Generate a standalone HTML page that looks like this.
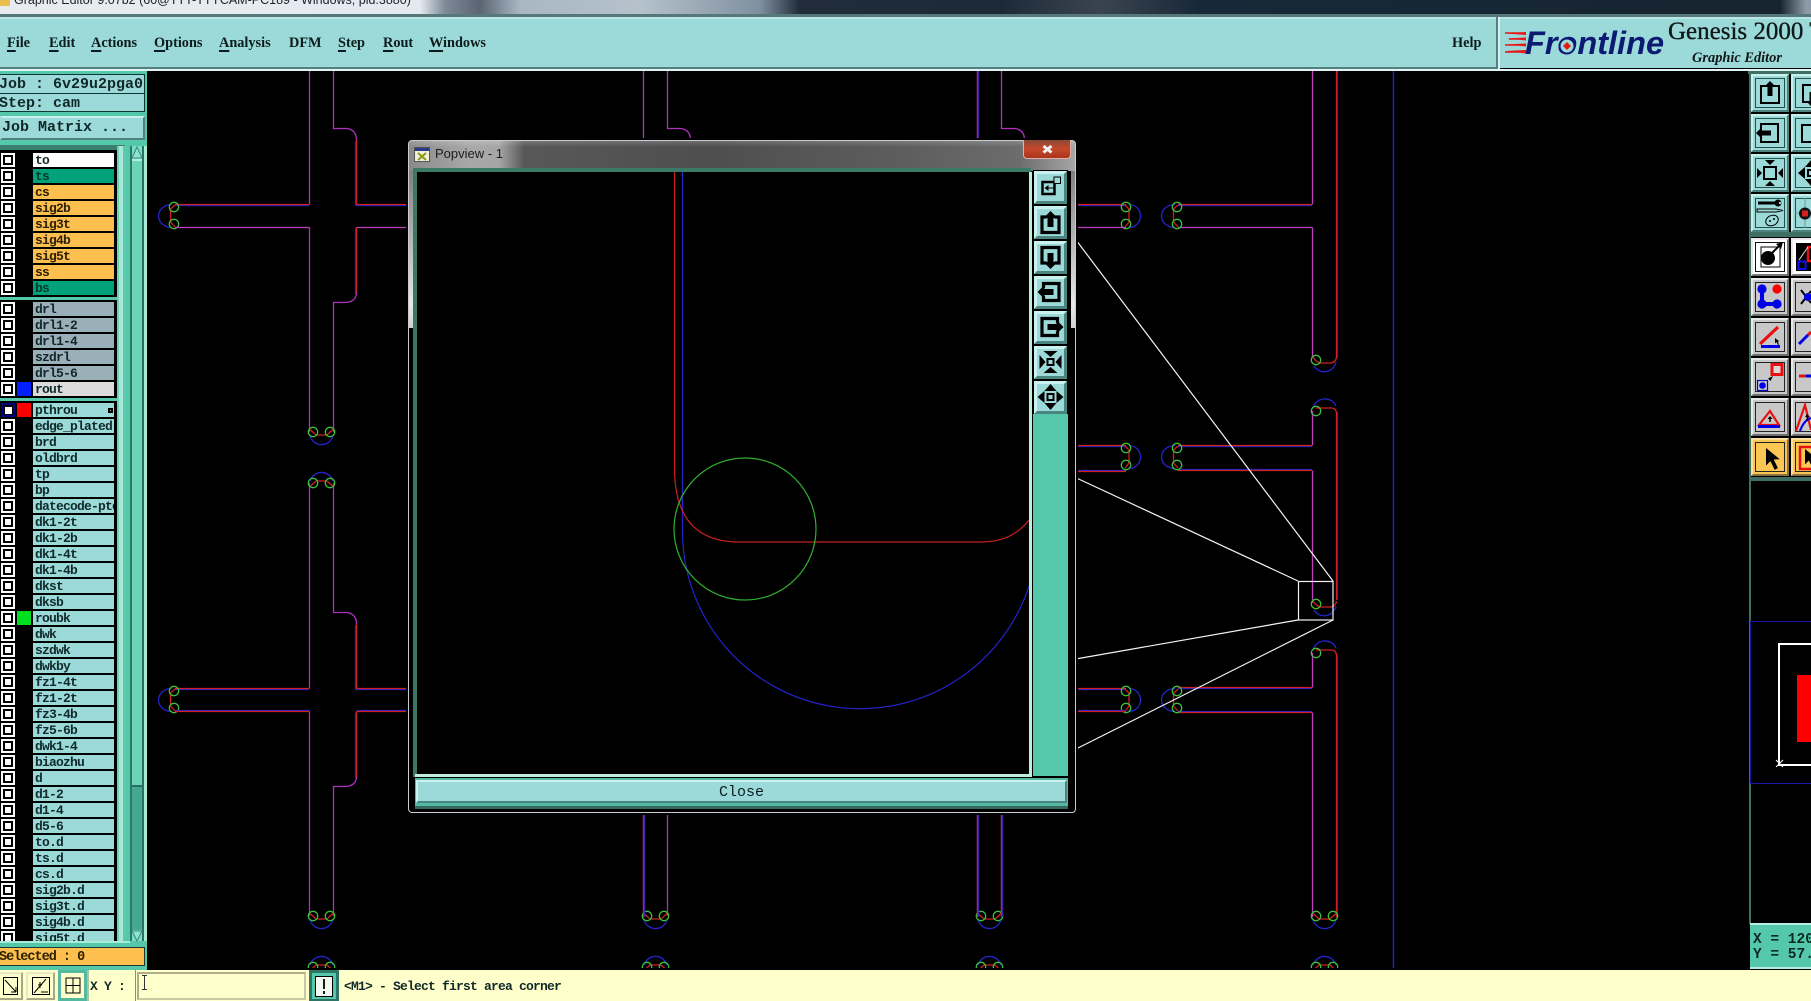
<!DOCTYPE html>
<html><head><meta charset="utf-8"><title>Graphic Editor</title>
<style>
html,body{margin:0;padding:0;background:#000;width:1811px;height:1001px;overflow:hidden}
#p{position:relative;width:1811px;height:1001px;overflow:hidden;background:#000}
#p div,#p span,#p b,#p i{position:absolute;display:block}
svg{position:absolute;left:0;top:0}
.m{font:bold 14.3px/18px "Liberation Serif",serif;color:#0c1c1c;top:34px;white-space:pre}
.m u{position:static;text-decoration:underline;text-decoration-thickness:1.5px;text-underline-offset:3px}
.mono{font-family:"Liberation Mono",monospace;font-weight:bold;color:#102828;white-space:pre}
.r{left:0;width:116px;height:15px}
.c{left:1px;top:0;width:14px;height:14px;background:#fff}
.c:after{content:"";position:absolute;left:2px;top:2px;width:6px;height:6px;border:2px solid #000}
.l{left:33px;top:0;width:79px;height:14px;padding-left:2px;background:#9cd9d9;overflow:hidden;font:bold 13px/16px "Liberation Mono",monospace;letter-spacing:-.8px;color:#102a2a;white-space:pre}
.o{background:#fdbf4e;color:#2b2000}.g{background:#00a27a;color:#073a2a}.s{background:#9ab0b8;color:#142428}
.tb{width:34px;height:34px;border:2px solid;border-color:#c8f0ec #4f827c #4f827c #c8f0ec;background:#9cd9d9;box-shadow:inset 0 0 0 2px #9cd9d9,inset 0 0 0 3px #24504c}
.gr{background:#c8c8c8;border-color:#e8e8e8 #6e6e6e #6e6e6e #e8e8e8;box-shadow:inset 0 0 0 2px #c8c8c8,inset 0 0 0 3px #222}
.wh{background:#fff;border-color:#e8e8e8 #777 #777 #e8e8e8;box-shadow:inset 0 0 0 2px #fff,inset 0 0 0 3px #111}
.or{background:#fcc655;border-color:#fde0a0 #8a7040 #8a7040 #fde0a0;box-shadow:inset 0 0 0 2px #fcc655,inset 0 0 0 3px #222}
.pb{left:1034px;width:27px;height:27px;border:3px solid;border-color:#c9f2ee #4a857f #4a857f #c9f2ee;background:#9cd9d9}
</style></head><body><div id="p">

<svg width="1811" height="1001" viewBox="0 0 1811 1001" fill="none" stroke-width="1.3">
<defs>
<g id="capL"><path d="M172 204.5A13.5 11.5 0 0 0 172 227.5" stroke="#2424c8"/><path d="M175 205L170.5 209V222L175 227" stroke="#d02020"/><circle cx="174" cy="207" r="4.7" stroke="#3cc03c"/><circle cx="174" cy="224" r="4.7" stroke="#3cc03c"/></g>
<g id="capR"><path d="M461 204.5A11.5 11.5 0 0 1 461 227.5" stroke="#2424c8"/><path d="M457 205L461 209V222L457 227" stroke="#d02020"/><circle cx="458" cy="207" r="4.7" stroke="#3cc03c"/><circle cx="458" cy="224" r="4.7" stroke="#3cc03c"/></g>
<g id="capB"><path d="M310 436A12 12 0 0 0 333 436" stroke="#2424c8"/><path d="M309.5 429L316 435H327L333.5 429" stroke="#d02020"/><circle cx="313" cy="432" r="4.7" stroke="#3cc03c"/><circle cx="330" cy="432" r="4.7" stroke="#3cc03c"/></g>
<g id="capT"><path d="M310 -3A12 12 0 0 1 333 -3" stroke="#2424c8"/><path d="M309.5 3L316 -3H327L333.5 3" stroke="#d02020"/><circle cx="313" cy="-1" r="4.7" stroke="#3cc03c"/><circle cx="330" cy="-1" r="4.7" stroke="#3cc03c"/></g>
<g id="capB4"><path d="M1314 366A12 12 0 0 0 1336 362" stroke="#2424c8"/><path d="M1312.5 356Q1316 363 1322 363H1331Q1336 362 1336.5 357" stroke="#d02020"/><circle cx="1316" cy="360" r="4.7" stroke="#3cc03c"/></g>
<g id="capT4"><path d="M1313 408A12 11 0 0 1 1336 406" stroke="#2424c8"/><path d="M1316 408H1331Q1336 408 1336.5 413" stroke="#d02020"/><circle cx="1316" cy="411" r="4.7" stroke="#3cc03c"/></g>
<path id="colRB" d="M175 204.5H309.5M356.5 204.5H458M356.5 140V204.5M356.5 227.5V293"/>
<g id="col">
<use href="#colRB" stroke="#2424c8" x="-1" y="1"/><use href="#colRB" stroke="#d02020"/>
<path d="M309.5 -1V204.5M309.5 227.5V432M333.5 -1V128.5H347Q356.5 130 356.5 140M356.5 293Q356 302 345 302.5H333.5V432" stroke="#b030c0"/>
<use href="#capL"/><use href="#capR"/><use href="#capB"/><use href="#capT"/>
</g>
<path id="mag1" d="M175 227.5H309.5M356.5 227.5H458"/>
</defs>

<use href="#col"/><use href="#col" x="334"/><use href="#col" x="668"/>
<use href="#col" y="484"/><use href="#col" x="334" y="484"/><use href="#col" x="668" y="484"/>
<use href="#capT" y="968"/><use href="#capT" x="334" y="968"/><use href="#capT" x="668" y="968"/>

<g stroke="#c040c0">
<use href="#mag1"/><use href="#mag1" x="668"/>
</g>
<g stroke="#2424c8"><use href="#mag1" y="483"/><use href="#mag1" x="668" y="483"/></g>
<g stroke="#d02020"><use href="#mag1" y="484"/><use href="#mag1" x="668" y="484"/></g>

<path d="M643.5 813V917M977.5 71V140M977.5 813V917M1001.5 813V917" stroke="#2424c8" transform="translate(1 0)"/>
<path d="M643.5 813V917M977.5 71V140M977.5 813V917M1001.5 813V917" stroke="#d02020"/>

<!-- col 3 mid stubs -->
<path d="M1070 446.5H1126M1070 470.5H1126" stroke="#2424c8"/>
<path d="M1070 445.5H1126M1070 471.5H1126" stroke="#d02020"/>
<use href="#capR" x="668" y="241"/>

<!-- col 4 -->
<path d="M1337.5 60V358M1337.5 412V600M1337.5 655V917M1178 205.5H1312M1178 446.5H1312M1178 469.5H1312M1178 688.5H1312M1178 711.5H1312" stroke="#2424c8"/>
<path d="M1336.5 60V358M1336.5 412V600M1336.5 655V917M1178 204.5H1312M1178 445.5H1312M1178 470.5H1312M1178 687.5H1312M1178 712.5H1312" stroke="#d02020"/>
<path d="M1312.5 60V204.5M1312.5 227.5V358M1312.5 411V445.5M1312.5 470.5V603M1312.5 653V687.5M1312.5 712.5V917M1178 227.5H1312.5" stroke="#c040c0"/>
<use href="#capL" x="1003"/><use href="#capL" x="1003" y="241"/><use href="#capL" x="1003" y="484"/>
<use href="#capB4"/><use href="#capB4" y="244"/><use href="#capT4"/><use href="#capT4" y="242"/>
<use href="#capB" x="1003" y="484"/><use href="#capT" x="1003" y="968"/>
<path d="M1393.5 71V968" stroke="#2222cc" stroke-width="1.4"/>

<!-- white zoom lines -->
<g stroke="#f4f4f4" stroke-width="1.2">
<rect x="1298.5" y="581.5" width="34.5" height="38.5"/>
<path d="M1333 581L1070 232M1298 581L1070 475M1298 620L1070 660M1333 620L1070 752"/>
</g>
</svg>

<div style="left:0;top:968px;width:1811px;height:2px;background:#000"></div>

<!-- OS title bar -->
<div style="left:0;top:0;width:1811px;height:15px;background:linear-gradient(90deg,#e8ecf0 0,#e4eaf0 420px,#7d8a98 445px,#5a6472 480px,#a9b7c4 520px,#b5c2cc 640px,#8090a0 760px,#202c3a 800px,#1c2a38 1000px,#3a4450 1100px,#182838 1200px,#16242f 1780px,#8c9aa8 1806px)"></div>
<div style="left:-2px;top:0;width:12px;height:6px;background:#e8c050"></div>
<div style="left:14px;top:-8px;font:12.5px/16px 'Liberation Sans',sans-serif;color:#20242c;white-space:pre">Graphic Editor 9.07b2 (60@TTT-TTYCAM-PC189 - Windows, pid:3880)</div>

<!-- menu bar -->
<div style="left:0;top:14px;width:1811px;height:3px;background:#56787a"></div>
<div style="left:0;top:17px;width:1811px;height:2px;background:#b8e6e6"></div>
<div style="left:0;top:19px;width:1811px;height:48px;background:#9cd9d9"></div>
<div style="left:0;top:67px;width:1498px;height:2px;background:#56807f"></div>
<div style="left:1498px;top:67px;width:313px;height:1px;background:#9cd9d9"></div>
<div style="left:0;top:69px;width:1811px;height:2px;background:#dff5f5"></div>
<div style="left:1496px;top:17px;width:2px;height:52px;background:#56807f"></div>
<div style="left:1498px;top:17px;width:2px;height:52px;background:#d8f2f2"></div>

<div class="m" style="left:7px"><u>F</u>ile</div>
<div class="m" style="left:49px"><u>E</u>dit</div>
<div class="m" style="left:91px"><u>A</u>ctions</div>
<div class="m" style="left:154px"><u>O</u>ptions</div>
<div class="m" style="left:219px"><u>A</u>nalysis</div>
<div class="m" style="left:289px">DFM</div>
<div class="m" style="left:338px"><u>S</u>tep</div>
<div class="m" style="left:383px"><u>R</u>out</div>
<div class="m" style="left:429px"><u>W</u>indows</div>
<div class="m" style="left:1452px">Help</div>

<!-- logo -->
<div style="left:1525px;top:24px;font:italic bold 32.5px/38px 'Liberation Sans',sans-serif;color:#0c1a72;white-space:pre">Frontline</div>
<div style="left:1668px;top:17px;font:25px/30px 'Liberation Serif',serif;color:#101818;white-space:pre;-webkit-text-stroke:.35px #101818">Genesis 2000 T</div>
<div style="left:1692px;top:50px;font:italic bold 14.4px/17px 'Liberation Serif',serif;color:#101818;white-space:pre">Graphic Editor</div>

<!-- left panel -->
<div style="left:0;top:71px;width:147px;height:899px;background:#55c8ac"></div>
<div style="left:0;top:74px;width:144px;height:18px;background:#9cd9d9;border:1px solid #0c3a32;border-left:0"></div>
<div style="left:0;top:93px;width:144px;height:17px;background:#9cd9d9;border:1px solid #0c3a32;border-left:0"></div>
<div class="mono" style="left:-1px;top:75px;font-size:15px;line-height:19px">Job : 6v29u2pga0</div>
<div class="mono" style="left:-1px;top:94px;font-size:15px;line-height:19px">Step: cam</div>
<div style="left:0;top:116px;width:141px;height:20px;background:#9cd9d9;border:2px solid;border-color:#c8f0ec #4f827c #4f827c #9cd9d9"></div>
<div class="mono" style="left:2px;top:118px;font-size:15px;line-height:19px">Job Matrix ...</div>
<div style="left:0;top:145px;width:125px;height:5px;background:#3c7f70"></div>

<!-- scroll stripes -->
<div style="left:117px;top:146px;width:30px;height:802px;background:linear-gradient(90deg,#6fd0b8 0,#6fd0b8 2px,#a8e8d8 2px,#a8e8d8 6px,#5fc8ae 6px,#5fc8ae 9px,#55c8ac 9px,#55c8ac 13px,#2a7a6a 13px,#2a7a6a 15px,#6dd4b8 15px,#6dd4b8 25px,#2a7060 25px,#2a7060 27px,#a8ecd8 27px)"></div>
<div style="left:132px;top:787px;width:10px;height:143px;background:#46a890"></div>
<div style="left:132px;top:146px;width:10px;height:13px;background:#7adcc8"></div>
<div style="left:132px;top:930px;width:10px;height:12px;background:#7adcc8"></div>
<div style="left:132px;top:159px;width:10px;height:2px;background:#b4eee0"></div>
<div style="left:132px;top:785px;width:10px;height:2px;background:#2a7060"></div>

<!-- list backgrounds -->
<div style="left:0;top:150px;width:117px;height:147px;background:#000"></div>
<div style="left:0;top:300px;width:117px;height:98px;background:#000"></div>
<div style="left:0;top:401px;width:117px;height:542px;background:#000"></div>

<div class="r" style="top:153px"><i class="c"></i><b class="l" style="background:#fff">to</b></div>
<div class="r" style="top:169px"><i class="c"></i><b class="l g">ts</b></div>
<div class="r" style="top:185px"><i class="c"></i><b class="l o">cs</b></div>
<div class="r" style="top:201px"><i class="c"></i><b class="l o">sig2b</b></div>
<div class="r" style="top:217px"><i class="c"></i><b class="l o">sig3t</b></div>
<div class="r" style="top:233px"><i class="c"></i><b class="l o">sig4b</b></div>
<div class="r" style="top:249px"><i class="c"></i><b class="l o">sig5t</b></div>
<div class="r" style="top:265px"><i class="c"></i><b class="l o">ss</b></div>
<div class="r" style="top:281px"><i class="c"></i><b class="l g">bs</b></div>

<div class="r" style="top:302px"><i class="c"></i><b class="l s">drl</b></div>
<div class="r" style="top:318px"><i class="c"></i><b class="l s">drl1-2</b></div>
<div class="r" style="top:334px"><i class="c"></i><b class="l s">drl1-4</b></div>
<div class="r" style="top:350px"><i class="c"></i><b class="l s">szdrl</b></div>
<div class="r" style="top:366px"><i class="c"></i><b class="l s">drl5-6</b></div>
<div class="r" style="top:382px"><i class="c"></i><i style="left:17px;top:0;width:14px;height:14px;background:#0020ff"></i><b class="l" style="background:#dcdcdc">rout</b></div>

<div class="r" style="top:403px"><i class="c" style="background:#000080"></i><i style="left:5px;top:4px;width:7px;height:7px;background:#fff"></i><i style="left:17px;top:0;width:14px;height:14px;background:#ff0000"></i><b class="l">pthrou</b><i style="left:108px;top:5px;width:3px;height:3px;border:1px solid #000;outline:1px solid #000;outline-offset:-3px;background:#9cd9d9"></i></div>
<div class="r" style="top:419px"><i class="c"></i><b class="l">edge_plated</b></div>
<div class="r" style="top:435px"><i class="c"></i><b class="l">brd</b></div>
<div class="r" style="top:451px"><i class="c"></i><b class="l">oldbrd</b></div>
<div class="r" style="top:467px"><i class="c"></i><b class="l">tp</b></div>
<div class="r" style="top:483px"><i class="c"></i><b class="l">bp</b></div>
<div class="r" style="top:499px"><i class="c"></i><b class="l">datecode-pte</b></div>
<div class="r" style="top:515px"><i class="c"></i><b class="l">dk1-2t</b></div>
<div class="r" style="top:531px"><i class="c"></i><b class="l">dk1-2b</b></div>
<div class="r" style="top:547px"><i class="c"></i><b class="l">dk1-4t</b></div>
<div class="r" style="top:563px"><i class="c"></i><b class="l">dk1-4b</b></div>
<div class="r" style="top:579px"><i class="c"></i><b class="l">dkst</b></div>
<div class="r" style="top:595px"><i class="c"></i><b class="l">dksb</b></div>
<div class="r" style="top:611px"><i class="c"></i><i style="left:17px;top:0;width:14px;height:14px;background:#00e020"></i><b class="l">roubk</b></div>
<div class="r" style="top:627px"><i class="c"></i><b class="l">dwk</b></div>
<div class="r" style="top:643px"><i class="c"></i><b class="l">szdwk</b></div>
<div class="r" style="top:659px"><i class="c"></i><b class="l">dwkby</b></div>
<div class="r" style="top:675px"><i class="c"></i><b class="l">fz1-4t</b></div>
<div class="r" style="top:691px"><i class="c"></i><b class="l">fz1-2t</b></div>
<div class="r" style="top:707px"><i class="c"></i><b class="l">fz3-4b</b></div>
<div class="r" style="top:723px"><i class="c"></i><b class="l">fz5-6b</b></div>
<div class="r" style="top:739px"><i class="c"></i><b class="l">dwk1-4</b></div>
<div class="r" style="top:755px"><i class="c"></i><b class="l">biaozhu</b></div>
<div class="r" style="top:771px"><i class="c"></i><b class="l">d</b></div>
<div class="r" style="top:787px"><i class="c"></i><b class="l">d1-2</b></div>
<div class="r" style="top:803px"><i class="c"></i><b class="l">d1-4</b></div>
<div class="r" style="top:819px"><i class="c"></i><b class="l">d5-6</b></div>
<div class="r" style="top:835px"><i class="c"></i><b class="l">to.d</b></div>
<div class="r" style="top:851px"><i class="c"></i><b class="l">ts.d</b></div>
<div class="r" style="top:867px"><i class="c"></i><b class="l">cs.d</b></div>
<div class="r" style="top:883px"><i class="c"></i><b class="l">sig2b.d</b></div>
<div class="r" style="top:899px"><i class="c"></i><b class="l">sig3t.d</b></div>
<div class="r" style="top:915px"><i class="c"></i><b class="l">sig4b.d</b></div>
<div class="r" style="top:931px"><i class="c"></i><b class="l">sig5t.d</b></div>

<div style="left:0;top:941px;width:147px;height:29px;background:#55c8ac"></div>
<div style="left:0;top:941px;width:130px;height:2px;background:#a8ecd8"></div>
<div style="left:0;top:947px;width:144px;height:17px;background:#fdbf4e;border:1px solid #1c3a30;border-left:0"></div>
<div class="mono" style="left:-1px;top:949px;font-size:13.5px;line-height:18px;letter-spacing:-1px;color:#2b2000">Selected : 0</div>

<!-- bottom bar -->
<div style="left:0;top:970px;width:1811px;height:31px;background:#ffffcc"></div>
<div style="left:-2px;top:972px;width:21px;height:24px;border:2px solid;border-color:#e8e8c8 #a8a888 #a8a888 #e8e8c8"></div>
<div style="left:26px;top:972px;width:25px;height:24px;border:2px solid;border-color:#e8e8c8 #a8a888 #a8a888 #e8e8c8"></div>
<div style="left:58px;top:970px;width:29px;height:31px;background:#55b8a0"></div>
<div style="left:61px;top:973px;width:23px;height:25px;background:#ffffcc"></div>
<div style="left:87px;top:970px;width:2px;height:31px;background:#a8c8a0"></div>
<div class="mono" style="left:90px;top:978px;font-size:13px;line-height:18px;letter-spacing:-.8px">X Y :</div>
<div style="left:135px;top:970px;width:1px;height:31px;background:#909078"></div>
<div style="left:137px;top:972px;width:165px;height:24px;border:2px solid;border-color:#b0b088 #c8c8a4 #c8c8a4 #b0b088"></div>
<div style="left:144px;top:975px;width:1px;height:14px;background:#333"></div>
<div style="left:142px;top:975px;width:5px;height:1px;background:#333"></div>
<div style="left:142px;top:989px;width:5px;height:1px;background:#333"></div>
<div style="left:309px;top:970px;width:30px;height:31px;background:#2f7565"></div>
<div style="left:312px;top:973px;width:24px;height:26px;background:#55c8ac"></div>
<div style="left:315px;top:976px;width:18px;height:20px;background:#f4f8f0"></div>
<div class="mono" style="left:344px;top:978px;font-size:13px;line-height:18px;letter-spacing:-.8px">&lt;M1&gt; - Select first area corner</div>

<!-- right toolbar -->
<div style="left:1748px;top:71px;width:63px;height:3px;background:#3f6f62"></div>
<div style="left:1749px;top:71px;width:2px;height:853px;background:#3f6f62"></div>
<div style="left:1751px;top:232px;width:60px;height:5px;background:#3f6f62"></div>
<div style="left:1751px;top:477px;width:60px;height:4px;background:#3f6f62"></div>
<div style="left:1751px;top:74px;width:60px;height:158px;background:#000"></div>
<div class="tb" style="left:1751px;top:74px"></div><div class="tb" style="left:1791px;top:74px"></div>
<div class="tb" style="left:1751px;top:114px"></div><div class="tb" style="left:1791px;top:114px"></div>
<div class="tb" style="left:1751px;top:154px"></div><div class="tb" style="left:1791px;top:154px"></div>
<div class="tb" style="left:1751px;top:194px"></div><div class="tb" style="left:1791px;top:194px"></div>
<div class="tb wh" style="left:1751px;top:238px"></div><div class="tb wh" style="left:1791px;top:238px;background:#000;box-shadow:inset 0 0 0 3px #fff"></div>
<div class="tb gr" style="left:1751px;top:278px"></div><div class="tb gr" style="left:1791px;top:278px"></div>
<div class="tb gr" style="left:1751px;top:318px"></div><div class="tb gr" style="left:1791px;top:318px"></div>
<div class="tb gr" style="left:1751px;top:358px"></div><div class="tb gr" style="left:1791px;top:358px"></div>
<div class="tb gr" style="left:1751px;top:398px"></div><div class="tb gr" style="left:1791px;top:398px"></div>
<div class="tb or" style="left:1751px;top:438px"></div><div class="tb or" style="left:1791px;top:438px"></div>

<!-- XY readout -->
<div style="left:1750px;top:923px;width:61px;height:46px;background:#55c8ac;border-top:2px solid #b4eee0;box-sizing:border-box"></div>
<div style="left:1750px;top:967px;width:61px;height:2px;background:#b4eee0"></div>
<div class="mono" style="left:1753px;top:933px;font-size:14.5px;line-height:15px;color:#0c2a24">X = 120</div>
<div class="mono" style="left:1753px;top:948px;font-size:14.5px;line-height:15px;color:#0c2a24">Y = 57.</div>

<!-- popup -->
<div style="left:408px;top:140px;width:666px;height:671px;background:#000;border:1px solid #c8ccd2;border-radius:4px;box-shadow:0 0 0 2px #000"></div>
<div style="left:409px;top:141px;width:666px;height:30px;border-radius:3px 3px 0 0;background:linear-gradient(90deg,#8a8a8a 0,#a8a8a8 60px,#a6a6a6 90px,#585858 115px,#4e4e4e 300px,#5e5e5e 500px,#6c6c6c 610px,#a6a6a6 666px)"></div>
<div style="left:409px;top:141px;width:666px;height:6px;background:linear-gradient(180deg,rgba(255,255,255,.18),rgba(255,255,255,0))"></div>
<div style="left:409px;top:171px;width:5px;height:157px;background:linear-gradient(180deg,#808080,#e8e8e8 85%,#d0d0d0)"></div>
<div style="left:1071px;top:171px;width:4px;height:157px;background:linear-gradient(180deg,#808080,#e8e8e8 85%,#d0d0d0)"></div>
<div style="left:435px;top:146px;font:13px/16px 'Liberation Sans',sans-serif;color:#1c1c1c;white-space:pre">Popview - 1</div>
<div style="left:1023px;top:140px;width:46px;height:18px;border:1px solid #e0b0a8;border-top:0;border-radius:0 0 4px 4px;background:linear-gradient(180deg,#8a4a3a,#c8482a 50%,#a8351c)"></div>
<div style="left:414px;top:168px;width:617px;height:4px;background:#3c7a68"></div>
<div style="left:413px;top:168px;width:4px;height:609px;background:#3f7565"></div>
<div style="left:417px;top:172px;width:612px;height:602px;background:#000"></div>
<div style="left:1029px;top:172px;width:3px;height:605px;background:#bfeee0"></div>
<div style="left:415px;top:774px;width:617px;height:3px;background:#bfeee0"></div>
<div style="left:1033px;top:170px;width:35px;height:606px;background:#55c8ac"></div>
<div style="left:1033px;top:170px;width:35px;height:244px;background:#000"></div>
<div class="pb" style="top:171px"></div>
<div class="pb" style="top:206px"></div>
<div class="pb" style="top:241px"></div>
<div class="pb" style="top:276px"></div>
<div class="pb" style="top:311px"></div>
<div class="pb" style="top:346px"></div>
<div class="pb" style="top:381px"></div>
<div style="left:415px;top:778px;width:653px;height:28px;background:#55b8a0"></div>
<div style="left:416px;top:780px;width:647px;height:19px;background:#9cd9d9;border:2px solid;border-color:#c9f2ee #4a857f #4a857f #c9f2ee"></div>
<div style="left:415px;top:806px;width:653px;height:3px;background:#35685e"></div>
<div style="left:719px;top:784px;width:46px;font:15px/18px 'Liberation Mono',monospace;color:#0c2020;white-space:pre">Close</div>

<!-- mini view -->
<div style="left:1750px;top:621px;width:61px;height:161px;border-top:1.5px solid #1818a8;border-bottom:1.5px solid #1818a8;border-left:1.5px solid #1818a8;box-sizing:content-box"></div>
<div style="left:1778px;top:643px;width:40px;height:119px;border:2px solid #fff"></div>
<div style="left:1797px;top:675px;width:14px;height:67px;background:#ff0000"></div>

<!-- overlay drawings -->
<svg width="1811" height="1001" viewBox="0 0 1811 1001" fill="none">
<defs>
<g id="up"><path d="M-4 -8H-9V9H9V-8H4" stroke="#000" stroke-width="2"/><path d="M0 -13L6 -7H2.5V2H-2.5V-7H-6Z" fill="#000"/></g>
<g id="upb"><path d="M-4 -7H-8.500V8.500H8.500V-7H4" stroke="#000" stroke-width="3.200"/><path d="M0 -13L7 -6H3V3H-3V-6H-7Z" fill="#000"/></g>
<g id="in4"><rect x="-6" y="-6" width="12" height="12" stroke="#000" stroke-width="2"/><path d="M-5 -13H5L0 -8ZM-5 13H5L0 8ZM-13 -5V5L-8 0ZM13 -5V5L8 0Z" fill="#000"/></g>
<g id="in6"><rect x="-3" y="-3" width="6" height="6" stroke="#000" stroke-width="2"/><path d="M-7 -11H7L0 -5ZM-7 11H7L0 5ZM-11 -7V7L-5 0ZM11 -7V7L5 0Z" fill="#000"/></g>
<g id="out"><rect x="-3" y="-3" width="6" height="6" stroke="#000" stroke-width="2"/><path d="M0 -13L6 -6H-6ZM0 13L6 6H-6ZM-13 0L-6 6V-6ZM13 0L6 6V-6Z" fill="#000"/></g>
<path id="cur" d="M0 0L0 14L3.5 10.5L7 17.5L9.5 16L6.2 9.2L11 9Z" fill="#000"/>
<clipPath id="cv"><rect x="417" y="172" width="612" height="602"/></clipPath>
</defs>

<!-- popup canvas -->
<g clip-path="url(#cv)" stroke-width="1.2">
<path d="M682.5 172V531.6A177.6 177.6 0 0 0 1029 586" stroke="#2424c8"/>
<path d="M674.5 172V468Q674.5 542 739 542H982Q1012 542 1029 520" stroke="#c82020"/>
<circle cx="745" cy="529" r="71" stroke="#30b030"/>
</g>

<!-- popup title icon + X -->
<rect x="414.5" y="147.5" width="15" height="14" fill="#f4eed8" stroke="#555"/>
<rect x="415" y="148" width="14" height="3" fill="#2a3a8a"/>
<path d="M418 153L426 160M426 153L418 160" stroke="#8a9a20" stroke-width="2"/>
<path d="M1043.500 146L1051.500 152.500M1051.500 146L1043.500 152.500" stroke="#f0f0f0" stroke-width="3"/>

<!-- popup icons -->
<g transform="translate(1050.5 188)"><rect x="-8" y="-6" width="12" height="12" stroke="#000" stroke-width="2.500"/><rect x="3.500" y="-11" width="6.500" height="6.500" stroke="#000" fill="#9cd9d9"/><path d="M3 0H-5" stroke="#000"/><path d="M-6 0L-2 -3V3Z" fill="#000"/></g>
<use href="#upb" transform="translate(1050.5 224)"/>
<use href="#upb" transform="translate(1050.5 256) rotate(180)"/>
<use href="#upb" transform="translate(1050.5 292) rotate(-90)"/>
<use href="#upb" transform="translate(1050.5 327) rotate(90)"/>
<use href="#in6" transform="translate(1050.5 362)"/>
<use href="#out" transform="translate(1050.5 397)"/>

<!-- toolbar icons top -->
<use href="#up" transform="translate(1770 94)"/>
<use href="#up" transform="translate(1812 94) rotate(180)"/>
<use href="#up" transform="translate(1769 133) rotate(-90)"/>
<rect x="1802" y="125" width="18" height="17" stroke="#000" stroke-width="2"/>
<use href="#in4" transform="translate(1770 173)"/>
<use href="#out" transform="translate(1811 173)"/>
<g transform="translate(1751 194)">
<path d="M7 9H24" stroke="#000" stroke-width="3"/><circle cx="27" cy="9" r="3.5" fill="#000"/><circle cx="29" cy="9" r="1.2" fill="#9cd9d9"/>
<path d="M6 15H25L32 16.5L25 18H6Z" stroke="#000"/>
<ellipse cx="21" cy="26.5" rx="6.5" ry="5" transform="rotate(-25 21 26.5)" stroke="#000"/>
<circle cx="19" cy="27" r="1" fill="#000"/><circle cx="23" cy="25" r="1" fill="#000"/>
</g>
<path d="M1805 198V228M1795 213H1811" stroke="#6a9a98"/>
<circle cx="1805" cy="213.500" r="6" fill="#111"/><rect x="1802" y="210.500" width="6" height="6" fill="#d02020"/>

<!-- second group icons col 1 -->
<g transform="translate(1751 238)">
<rect x="10" y="9" width="19" height="20" stroke="#000"/>
<circle cx="17" cy="20" r="7" fill="#000"/>
<path d="M21 15L30 6" stroke="#000" stroke-width="2"/><path d="M32 4L25 6L30 11Z" fill="#000"/>
</g>
<g transform="translate(1751 278)">
<path d="M11 11V26H26" stroke="#0000e8" stroke-width="4"/>
<circle cx="11" cy="11" r="4.6" fill="#0000e8"/><circle cx="11" cy="26" r="4.6" fill="#0000e8"/><circle cx="26" cy="26" r="4.6" fill="#0000e8"/><circle cx="26" cy="11" r="4.6" fill="#f00"/>
</g>
<g transform="translate(1751 318)">
<path d="M9 26L27 9" stroke="#e81010" stroke-width="3.2"/><path d="M10 28.500H29" stroke="#0000e8" stroke-width="3"/>
<path d="M24 20L24 25.500L25.500 24L27 27L28 26.500L26.700 23.700L28.500 23.500Z" fill="#000"/>
</g>
<g transform="translate(1751 358)">
<rect x="21" y="6.500" width="10" height="10" stroke="#e81010" stroke-width="3" fill="#d8d8d8"/>
<rect x="6.500" y="22.500" width="10" height="10" stroke="#0000c8" stroke-width="1.2"/><circle cx="11.500" cy="27.500" r="3.300" fill="#0000e8"/>
<path d="M22 18L17 20.500L19.500 23Z" fill="#000"/>
</g>
<g transform="translate(1751 398)">
<path d="M8 27L19 13L28 27Z" stroke="#e81010" stroke-width="2.200"/><path d="M7 28.500H29" stroke="#0000e8" stroke-width="3"/>
<path d="M19 18L16.500 21H18.300V24H19.700V21H21.500Z" fill="#000"/>
</g>
<use href="#cur" transform="translate(1766 448) scale(1.25)"/>

<!-- second group icons col 2 -->
<g transform="translate(1791 238)">
<rect x="17" y="9" width="10" height="14" stroke="#e81010" stroke-width="2.500"/>
<rect x="7.500" y="23.500" width="7" height="7.500" stroke="#1010e8" stroke-width="2"/>
<path d="M8 22L17 9" stroke="#ddd"/>
</g>
<g transform="translate(1791 278)">
<path d="M10 12L20 25M10 26L20 13" stroke="#000" stroke-width="2"/><circle cx="17" cy="19" r="4" fill="#0000e8"/>
</g>
<path d="M1799 344L1808 335" stroke="#0000e8" stroke-width="3"/><path d="M1808 335L1811 332" stroke="#e81010" stroke-width="3"/>
<path d="M1799 376H1806" stroke="#e81010" stroke-width="3"/><path d="M1806 376H1811" stroke="#0000e8" stroke-width="3"/>
<path d="M1796 431L1805 405L1811 430" stroke="#e81010" stroke-width="2.200"/>
<path d="M1800 431Q1804 420 1811 418" stroke="#0000e8" stroke-width="2.200"/>
<path d="M1807 414L1805 417H1806.500V421H1808V417H1810Z" fill="#000"/>
<rect x="1800" y="447" width="14" height="22" stroke="#e81010" stroke-width="2.500"/>
<use href="#cur" transform="translate(1805 449) scale(1.1)"/>

<!-- logo marks -->
<path d="M1505 33.500L1526 32V35ZM1507 38.500L1526 37.500V40.500ZM1505 44.500L1526 43.500V46.500ZM1505 51L1526 50V53.500Z" fill="#e81818"/>
<path d="M1505 33H1526M1509 39H1526M1505 45H1526M1505 52H1526" stroke="#e81818" stroke-width="1.500"/>
<circle cx="1567" cy="46" r="7.500" fill="#9cd9d9" stroke="#0c1a72" stroke-width="2"/>
<path d="M1567 42L1571 46L1567 50L1563 46Z" fill="#e81818"/>

<!-- mini origin mark -->
<path d="M1776 760L1783 767M1783 760L1776 767" stroke="#fff"/>

<!-- scroll arrows on left panel -->
<path d="M137 147L142 158H132Z" fill="#8ee4d0" stroke="#3a8a78"/>
<path d="M137 941L142 931H132Z" fill="#8ee4d0" stroke="#3a8a78"/>

<!-- bottom bar icons -->
<rect x="3.500" y="977.500" width="14" height="17" stroke="#000" fill="#ffffcc"/>
<path d="M5 980L16 992M16 992V987M16 992H11" stroke="#000"/>
<rect x="32.500" y="977.500" width="17" height="17" stroke="#000"/>
<path d="M34 993L46 979M40 982V988M38 985H42M41 992L48 992" stroke="#000"/>
<rect x="66" y="978" width="14" height="15" stroke="#000"/>
<path d="M73 978V993M66 985.500H80" stroke="#000"/>
<path d="M324 979V989M324 991V994" stroke="#000" stroke-width="1.800"/>
<rect x="315.500" y="976.500" width="17" height="20" stroke="#000"/>
</svg>
</div></body></html>
